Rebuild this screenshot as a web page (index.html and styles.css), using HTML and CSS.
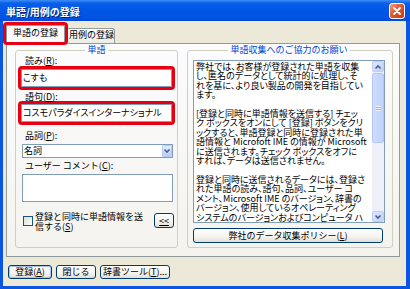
FILE: index.html
```html
<!DOCTYPE html>
<html lang="ja">
<head>
    <meta charset="UTF-8">
    <title>単語/用例の登録</title>
    <link rel="stylesheet" href="styles.css">
</head>
<body>
    <div class="window">
        <div class="titlebar">
            <span class="title">単語/用例の登録</span>
            <span class="close">
                <svg width="8" height="8" viewBox="0 0 8 8"><path d="M1 1L7 7M7 1L1 7" stroke="#fff" stroke-width="1.8" stroke-linecap="round"/></svg>
            </span>
        </div>
        <div class="client">
            <div class="tabs">
                <div class="tab active">単語の登録<span class="mark-tab"></span></div>
                <div class="tab">用例の登録</div>
            </div>
            <div class="panel">
                <fieldset class="group word">
                    <legend>単語</legend>
                    <div class="label">読み(<u>R</u>):</div>
                    <div class="mark"><div class="input">こすも</div></div>
                    <div class="label label-phrase">語句(<u>D</u>):</div>
                    <div class="mark mark-phrase"><div class="input">コスモパラダイスインターナショナル</div></div>
                    <div class="label label-part">品詞(<u>P</u>):</div>
                    <div class="select">
                        <span>名詞</span>
                        <span class="drop">
                            <svg width="8" height="6" viewBox="0 0 8 6"><path d="M1.5 1.5L4 4L6.5 1.5" fill="none" stroke="#4d6185" stroke-width="1.6"/></svg>
                        </span>
                    </div>
                    <div class="label label-comment">ユーザー コメント(<u>C</u>):</div>
                    <div class="textarea"></div>
                    <div class="check-row">
                        <span class="checkbox"></span>
                        <span class="check-text">登録と同時に単語情報を送<br>信する(<u>S</u>)</span>
                        <button class="btn btn-less"><u>&lt;&lt;</u></button>
                    </div>
                </fieldset>
                <fieldset class="group notice">
                    <legend>単語収集へのご協力のお願い</legend>
                    <div class="textbox">
                        <div class="textbox-text">弊社では、お客様が登録された単語を収集<br>し、匿名のデータとして統計的に処理し、そ<br>れを基に、より良い製品の開発を目指してい<br>ます。<br><br>[登録と同時に単語情報を送信する] チェッ<br>ク ボックスをオンにして [登録] ボタンをクリ<br>ックすると、単語登録と同時に登録された単<br>語情報と Microfoft IME の情報が Microsoft<br>に送信されます。チェック ボックスをオフに<br>すれば、データは送信されません。<br><br>登録と同時に送信されるデータには、登録さ<br>れた単語の読み、語句、品詞、ユーザー コ<br>メント、Microsoft IME のバージョン、辞書の<br>バージョン、使用しているオペレーティング<br>システムのバージョンおよびコンピュータ ハ</div>
                        <div class="scrollbar">
                            <span class="sb-btn">
                                <svg width="8" height="6" viewBox="0 0 8 6"><path d="M1.5 4.5L4 2L6.5 4.5" fill="none" stroke="#4d6185" stroke-width="1.6"/></svg>
                            </span>
                            <span class="sb-thumb"><span class="grip"></span></span>
                            <span class="sb-track"></span>
                            <span class="sb-btn">
                                <svg width="8" height="6" viewBox="0 0 8 6"><path d="M1.5 1.5L4 4L6.5 1.5" fill="none" stroke="#4d6185" stroke-width="1.6"/></svg>
                            </span>
                        </div>
                    </div>
                    <button class="btn btn-policy">弊社のデータ収集ポリシー(<u>L</u>)</button>
                </fieldset>
            </div>
            <div class="buttons">
                <button class="btn btn-default btn-add">登録(<u>A</u>)</button>
                <button class="btn btn-close">閉じる</button>
                <button class="btn btn-tool">辞書ツール(<u>T</u>)...</button>
            </div>
        </div>
    </div>
</body>
</html>
```

FILE: styles.css
```css
body {
    margin: 0;
    font-family: "Noto Sans CJK JP", sans-serif;
    font-size: 9px;
    color: #000;
}
.window {
    width: 410px;
    height: 289px;
    box-sizing: border-box;
    padding: 0 4px 3px 3px;
    background: #0a55e2;
    display: flex;
    flex-direction: column;
}
.titlebar {
    height: 21px;
    margin: 0 -4px 0 -3px;
    padding: 0 5px 0 6px;
    display: flex;
    align-items: center;
    justify-content: space-between;
    background: linear-gradient(#3d8ef7, #0a5fea 15%, #0056e6 50%, #0054e2 85%, #0149d6);
}
.title {
    color: #fff;
    font-weight: bold;
    font-size: 10px;
    padding-top: 1px;
    text-shadow: 1px 1px #0a1e7a;
}
.close {
    width: 16px;
    height: 16px;
    box-sizing: border-box;
    border: 1px solid #fff;
    border-radius: 3px;
    background: linear-gradient(135deg, #f2a182, #e2552d 45%, #c63b13);
    display: flex;
    align-items: center;
    justify-content: center;
}
.client {
    flex: 1;
    background: #ece9d8;
}
.tabs {
    height: 22px;
    padding-left: 3px;
    display: flex;
    align-items: flex-end;
    position: relative;
    z-index: 1;
}
.tab {
    box-sizing: border-box;
    width: 49px;
    height: 15px;
    margin-left: 1px;
    padding: 1px 0 0 2px;
    border: 1px solid #919b9c;
    border-bottom: none;
    border-radius: 3px 3px 0 0;
    background: linear-gradient(#fff, #ecebe5);
    line-height: 10px;
}
.tab.active {
    width: 59px;
    height: 20px;
    margin: 0 0 -1px 0;
    padding: 2px 0 0 0;
    border-top: 2px solid #e68b2c;
    background: #fcfcfe;
    text-align: center;
    position: relative;
}
.mark-tab {
    position: absolute;
    left: -4px;
    right: -4px;
    top: -4px;
    bottom: -1px;
    border: 3px solid #e60012;
    border-radius: 4px;
}
.panel {
    margin-left: 3px;
    width: 394px;
    height: 214px;
    box-sizing: border-box;
    padding: 1px 6px 8px 8px;
    border: 1px solid #919b9c;
    background: linear-gradient(#fcfcfe, #f4f3ee);
    display: grid;
    grid-template-columns: 163px 206px;
    column-gap: 9px;
}
.group {
    margin: 0;
    min-width: 0;
    border: 1px solid #d0d0bf;
    border-radius: 3px;
}
.group legend {
    margin: 0 auto;
    padding: 0 2px;
    color: #0046d5;
    line-height: 10px;
}
.word {
    padding: 1px 2px 0 2px;
}
.label {
    margin-left: 7px;
    line-height: 10px;
    white-space: nowrap;
}
.label-phrase {
    margin-top: 2px;
}
.label-part {
    margin-top: 6px;
}
.label-comment {
    margin-top: 3px;
}
.mark {
    border: 3px solid #e60012;
    border-radius: 4px;
}
.mark-phrase {
    margin-top: -1px;
}
.input {
    height: 18px;
    box-sizing: border-box;
    padding-left: 1px;
    border: 1px solid #7f9db9;
    background: #fff;
    line-height: 16px;
    white-space: nowrap;
    overflow: hidden;
    font-feature-settings: "palt";
}
.select {
    width: 151px;
    height: 14px;
    box-sizing: border-box;
    margin: 3px 0 0 4px;
    padding-left: 1px;
    border: 1px solid #7f9db9;
    background: #fff;
    display: flex;
    align-items: stretch;
    justify-content: space-between;
    line-height: 12px;
}
.drop {
    width: 10px;
    box-sizing: border-box;
    border: 1px solid #b9cbf3;
    border-radius: 1px;
    background: linear-gradient(#e3ebfe, #b9cdfa);
    display: flex;
    align-items: center;
    justify-content: center;
}
.textarea {
    width: 151px;
    height: 28px;
    box-sizing: border-box;
    margin: 3px 0 0 4px;
    border: 1px solid #7f9db9;
    background: #fff;
}
.check-row {
    margin-top: 10px;
    padding-left: 5px;
    display: flex;
    align-items: flex-start;
}
.checkbox {
    width: 10px;
    height: 10px;
    box-sizing: border-box;
    margin: 4px 2px 0 0;
    border: 1px solid #1c5180;
    background: linear-gradient(135deg, #dcdcd7, #fff);
}
.check-text {
    line-height: 10px;
    white-space: nowrap;
}
.btn {
    box-sizing: border-box;
    margin: 0;
    padding: 0;
    border: 1px solid #003c74;
    border-radius: 3px;
    background: linear-gradient(#fff, #f4f3ee 60%, #e3dfd4);
    font: inherit;
    color: #000;
    line-height: 12px;
    text-align: center;
    white-space: nowrap;
}
.btn-default {
    box-shadow: inset 0 0 0 1px #a9c3f1;
}
.btn-less {
    width: 20px;
    height: 15px;
    margin: 1px 1px 0 auto;
}
.notice {
    padding: 5px 7px 0 5px;
}
.textbox {
    height: 163px;
    box-sizing: border-box;
    border: 1px solid #7f9db9;
    background: #fff;
    display: flex;
}
.textbox-text {
    flex: 1;
    padding: 1px 0 0 2px;
    line-height: 9.4px;
    white-space: nowrap;
    overflow: hidden;
    font-feature-settings: "palt";
}
.scrollbar {
    width: 12px;
    background: #eef0f9;
    display: flex;
    flex-direction: column;
}
.sb-btn {
    height: 11px;
    box-sizing: border-box;
    border: 1px solid #bccff8;
    border-radius: 2px;
    background: linear-gradient(135deg, #e0e8fe, #bcd0fb);
    display: flex;
    align-items: center;
    justify-content: center;
}
.sb-thumb {
    height: 70px;
    margin-top: 1px;
    box-sizing: border-box;
    border: 1px solid #b4c8f6;
    border-radius: 2px;
    background: linear-gradient(90deg, #cddcfe, #c0d3fc);
    display: flex;
    align-items: center;
    justify-content: center;
}
.grip {
    width: 5px;
    height: 5px;
    background: repeating-linear-gradient(#eef3ff 0 1px, #9eb6ea 1px 2px);
}
.sb-track {
    flex: 1;
}
.btn-policy {
    display: block;
    width: 190px;
    height: 15px;
    margin-top: 5px;
}
.buttons {
    margin: 8px 0 0 5px;
    display: flex;
    gap: 4px;
}
.buttons .btn {
    height: 14px;
}
.btn-add {
    width: 44px;
}
.btn-close {
    width: 40px;
}
.btn-tool {
    width: 70px;
}
```
